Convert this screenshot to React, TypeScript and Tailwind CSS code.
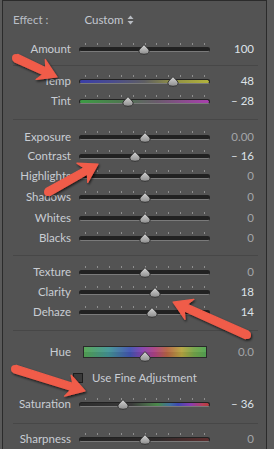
import React from "react";

const TICKS = [0, 1, 2, 3, 4, 5, 6, 7, 8, 9, 10];

function Thumb({ x, className }: { x: number; className: string }) {
  return (
    <svg
      width="12"
      height="11"
      viewBox="0 0 12 11"
      className={"absolute " + className}
      style={{ left: x - 6 }}
    >
      <defs>
        <linearGradient id="thumbg" x1="0" y1="0" x2="0" y2="1">
          <stop offset="0" stopColor="#d6d6d6" />
          <stop offset="1" stopColor="#8c8c8c" />
        </linearGradient>
      </defs>
      <path
        d="M6 0.6 L10.2 5 Q11.4 6.4 11 8.2 Q10.2 10.3 6 10.3 Q1.8 10.3 1 8.2 Q0.6 6.4 1.8 5 Z"
        fill="url(#thumbg)"
        stroke="#2a2a2a"
        strokeWidth="0.9"
      />
    </svg>
  );
}

function Slider({ pos, track }: { pos: number; track: string }) {
  return (
    <div className="relative w-[131px] h-[12px] shrink-0">
      {TICKS.map((i) => (
        <div
          key={i}
          className="absolute top-0 w-px h-[2px] bg-[#8e8e8e]"
          style={{ left: Math.round(6 + i * 11.9) }}
        />
      ))}
      <div
        className={
          "absolute left-0 right-0 top-[4px] h-[5px] rounded-full border border-[#222] border-b-[#7a7a7a] " +
          track
        }
      />
      <Thumb x={pos - 79} className="top-[1px]" />
    </div>
  );
}

function Row({
  label,
  pos,
  value,
  dim,
  track = "bg-[#212121]",
  h,
}: {
  label: string;
  pos: number;
  value: string;
  dim?: boolean;
  track?: string;
  h: string;
}) {
  return (
    <div className={"flex items-center " + h}>
      <div className="w-[68px] text-right text-[#c9cdd3] shrink-0">{label}</div>
      <div className="ml-[8px]">
        <Slider pos={pos} track={track} />
      </div>
      <div
        className={
          "w-[44px] text-right shrink-0 " +
          (dim ? "text-[#a3a5a8]" : "text-[#dde2e8]")
        }
      >
        {value}
      </div>
    </div>
  );
}

function Sep({ h }: { h: string }) {
  return (
    <div className={"flex items-center " + h}>
      <div className="ml-[10px] w-[245px] h-px bg-[#474747]" />
    </div>
  );
}

function Arrow({ x1, y1, x2, y2 }: { x1: number; y1: number; x2: number; y2: number }) {
  const dx = x2 - x1;
  const dy = y2 - y1;
  const len = Math.hypot(dx, dy);
  const ux = dx / len;
  const uy = dy / len;
  const nx = -uy;
  const ny = ux;
  const L = 18;
  const H = 11;
  const wt = 4;
  const ws = 3.6;
  const bx = x2 - ux * L;
  const by = y2 - uy * L;
  const bx2 = x2 - ux * (L - 4);
  const by2 = y2 - uy * (L - 4);
  const pts = [
    [x1 + nx * wt, y1 + ny * wt],
    [bx2 + nx * ws, by2 + ny * ws],
    [bx + nx * H, by + ny * H],
    [x2, y2],
    [bx - nx * H, by - ny * H],
    [bx2 - nx * ws, by2 - ny * ws],
    [x1 - nx * wt, y1 - ny * wt],
  ]
    .map((p) => p[0].toFixed(1) + "," + p[1].toFixed(1))
    .join(" ");
  return (
    <g filter="url(#ashadow)">
      <circle cx={x1} cy={y1} r={wt} fill="#f05c4a" />
      <polygon points={pts} fill="#f05c4a" strokeLinejoin="round" stroke="#f05c4a" strokeWidth="1.2" />
    </g>
  );
}

export default function App() {
  return (
    <div
      className="relative w-[274px] h-[449px] bg-[#5a5a5a] flex overflow-hidden text-[11.5px] leading-none"
      style={{ fontFamily: "Lato, 'Liberation Sans', sans-serif" }}
    >
      <div className="w-[2px] shrink-0" />
      <div className="w-[265px] shrink-0 border-l border-t border-r border-[#2b2b2b] bg-[#535353] flex flex-col">
        <div className="flex items-center h-[37px] pl-[10px] text-[#b9bec6]">
          <span>Effect :</span>
          <span className="ml-[36px] text-[#c3c8d0]">Custom</span>
          <svg width="7" height="10" viewBox="0 0 7 10" className="ml-[4px]">
            <path d="M3.5 0.5 L6.5 4 L0.5 4 Z" fill="#b8bcc2" />
            <path d="M3.5 9.5 L6.5 6 L0.5 6 Z" fill="#b8bcc2" />
          </svg>
        </div>
        <Row h="h-[22px]" label="Amount" pos={144} value="100" />
        <Sep h="h-[10px]" />
        <Row
          h="h-[21px]"
          label="Temp"
          pos={173}
          value="48"
          track="bg-[linear-gradient(90deg,#3a3ea8,#4a4c8e_25%,#5e5e62_50%,#8d8d46_70%,#b2b33c)]"
        />
        <Row
          h="h-[20px]"
          label="Tint"
          pos={128}
          value="– 28"
          track="bg-[linear-gradient(90deg,#3c9c44,#4d7a4f_30%,#6a5a6c_60%,#a93fae)]"
        />
        <Sep h="h-[16px]" />
        <Row h="h-[19px]" label="Exposure" pos={145} value="0.00" dim />
        <Row h="h-[20px]" label="Contrast" pos={135} value="– 16" />
        <Row h="h-[20px]" label="Highlights" pos={145} value="0" dim />
        <Row h="h-[22px]" label="Shadows" pos={145} value="0" dim />
        <Row h="h-[20px]" label="Whites" pos={145} value="0" dim />
        <Row h="h-[20px]" label="Blacks" pos={145} value="0" dim />
        <Sep h="h-[14px]" />
        <Row h="h-[20px]" label="Texture" pos={145} value="0" dim />
        <Row h="h-[20px]" label="Clarity" pos={155} value="18" />
        <Row h="h-[20px]" label="Dehaze" pos={152} value="14" />
        <Sep h="h-[16px]" />
        <div className="flex items-center h-[28px]">
          <div className="w-[68px] text-right text-[#c9cdd3] shrink-0">Hue</div>
          <div className="relative ml-[12px] w-[124px] h-[12px] border border-[#2a2a2a] flex flex-col">
            <div className="flex-1 bg-[linear-gradient(90deg,#5aa85a,#4a9a9a_20%,#4a5ab4_38%,#8a48b0_48%,#b04a86_58%,#b86a4a_68%,#b8a848_80%,#7aa850_90%,#58a858)]" />
            <div className="flex-1 bg-[linear-gradient(90deg,#4f9a4f,#3f8a8c_20%,#3f4fa6_38%,#7e3ea2_48%,#a43e7a_58%,#ac5e40_68%,#ac9c3e_80%,#6e9c46_90%,#4f9a4f)]" />
            <Thumb x={144 - 83} className="top-[4px]" />
          </div>
          <div className="ml-[3px] w-[44px] text-right text-[#a3a5a8] shrink-0">0.0</div>
        </div>
        <div className="flex items-center h-[24px]">
          <div className="ml-[70px] w-[10px] h-[10px] border border-[#1c1c1c] bg-[#3a3a3a]" />
          <span className="ml-[9px] text-[#c9cdd3]">Use Fine Adjustment</span>
        </div>
        <Row
          h="h-[28px]"
          label="Saturation"
          pos={123}
          value="– 36"
          track="bg-[linear-gradient(90deg,#2c2c2c,#3a3a3a_40%,#4a6a4a_52%,#4a8a4a_60%,#3f6fa0_70%,#3f48b0_76%,#8a3cb0_86%,#b8405a_95%,#b83c3c)]"
        />
        <Sep h="h-[10px]" />
        <Row
          h="h-[21px]"
          label="Sharpness"
          pos={145}
          value="0"
          dim
          track="bg-[linear-gradient(90deg,#242424,#2e2a2a_60%,#5e2e2e)]"
        />
      </div>
      <div className="flex-1" />
      <svg
        width="274"
        height="449"
        viewBox="0 0 274 449"
        className="absolute left-0 top-0 pointer-events-none"
      >
        <defs>
          <filter id="ashadow" x="-30%" y="-30%" width="160%" height="160%">
            <feDropShadow dx="1" dy="1.5" stdDeviation="1.3" floodColor="#000" floodOpacity="0.7" />
          </filter>
        </defs>
        <Arrow x1={16} y1={58} x2={57} y2={77} />
        <Arrow x1={48} y1={192} x2={98} y2={164} />
        <Arrow x1={247} y1={335} x2={173} y2={302} />
        <Arrow x1={15} y1={369} x2={85} y2={391} />
      </svg>
    </div>
  );
}
